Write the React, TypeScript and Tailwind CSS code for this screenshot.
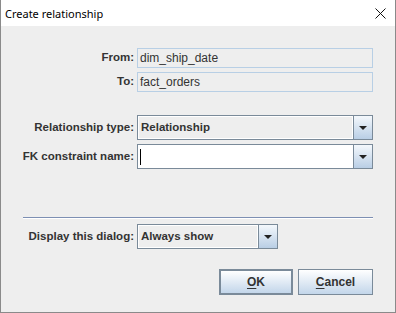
import React from "react";

const Arrow = () => (
  <svg width="8" height="4" viewBox="0 0 8 4">
    <polygon points="0,0 8,0 4,4" fill="#222" />
  </svg>
);

function ArrowButton() {
  return (
    <div className="w-[19px] h-full border-l border-[#7a8a99] bg-gradient-to-b from-[#f4f8fc] to-[#b9cee5] flex items-center justify-center">
      <Arrow />
    </div>
  );
}

function Label({ children }: { children: React.ReactNode }) {
  return (
    <div className="w-[114px] shrink-0 pr-[3px] flex justify-end whitespace-nowrap font-bold text-[11.5px] text-[#333333] leading-none">
      {children}
    </div>
  );
}

export default function App() {
  return (
    <div
      className="w-[396px] h-[313px] flex flex-col bg-[#eeeeee] border-l border-r border-b border-[#8a8a8a]"
      style={{ fontFamily: '"Liberation Sans", Arial, sans-serif' }}
    >
      {/* title bar */}
      <div className="h-[26px] shrink-0 bg-white flex items-center justify-between pl-[4px] pr-[9px]">
        <span
          className="text-[11px] text-black leading-none"
          style={{ fontFamily: '"Noto Sans", "Open Sans", sans-serif' }}
        >
          Create relationship
        </span>
        <svg width="11" height="11" viewBox="0 0 11 11" className="mt-[1px]">
          <path d="M0.5 0.5 L10.5 10.5 M10.5 0.5 L0.5 10.5" stroke="#111" strokeWidth="1" />
        </svg>
      </div>

      {/* body */}
      <div className="flex flex-col px-[22px] pt-[22px]">
        <div className="flex items-center h-[20px]">
          <Label>From:</Label>
          <div className="flex-1 h-full border border-[#b8cfe5] bg-[#eeeeee] flex items-center pl-[2px] text-[12px] text-[#333333]">
            dim_ship_date
          </div>
        </div>
        <div className="flex items-center h-[20px] mt-[4px]">
          <Label>To:</Label>
          <div className="flex-1 h-full border border-[#b8cfe5] bg-[#eeeeee] flex items-center pl-[2px] text-[12px] text-[#333333]">
            fact_orders
          </div>
        </div>

        <div className="flex items-center h-[25px] mt-[23px]">
          <Label>Relationship type:</Label>
          <div className="flex-1 h-full flex border border-[#7a8a99] bg-[#eeeeee]">
            <div className="flex-1 flex items-center pl-[2px] border border-white font-bold text-[11.5px] text-[#333333]">
              Relationship
            </div>
            <ArrowButton />
          </div>
        </div>

        <div className="flex items-center h-[25px] mt-[4px]">
          <Label>FK constraint name:</Label>
          <div className="flex-1 h-full flex border border-[#7a8a99] bg-white">
            <div className="flex-1 flex items-center pl-[2px]">
              <div className="w-[1px] h-[16px] bg-black" />
            </div>
            <ArrowButton />
          </div>
        </div>

        <div className="mt-[48px] h-[2px] flex flex-col">
          <div className="h-[1px] bg-[#7d8fb3]" />
          <div className="h-[1px] bg-white" />
        </div>

        <div className="flex items-center h-[25px] mt-[5px]">
          <Label>Display this dialog:</Label>
          <div className="w-[141px] h-full flex border border-[#7a8a99] bg-[#eeeeee]">
            <div className="flex-1 flex items-center pl-[2px] border border-white font-bold text-[11.5px] text-[#333333]">
              Always show
            </div>
            <ArrowButton />
          </div>
        </div>

        <div className="flex justify-end gap-[5px] mt-[20px]">
          <button className="w-[74px] h-[26px] border-2 border-[#7a8a99] bg-gradient-to-b from-white to-[#c3d6ea] flex items-center justify-center font-bold text-[12px] text-[#333333]">
            <span>
              <span className="underline underline-offset-2">O</span>K
            </span>
          </button>
          <button className="w-[75px] h-[26px] border border-[#7a8a99] bg-gradient-to-b from-white to-[#c3d6ea] flex items-center justify-center font-bold text-[12px] text-[#333333]">
            <span>
              <span className="underline underline-offset-2">C</span>ancel
            </span>
          </button>
        </div>
      </div>
    </div>
  );
}
